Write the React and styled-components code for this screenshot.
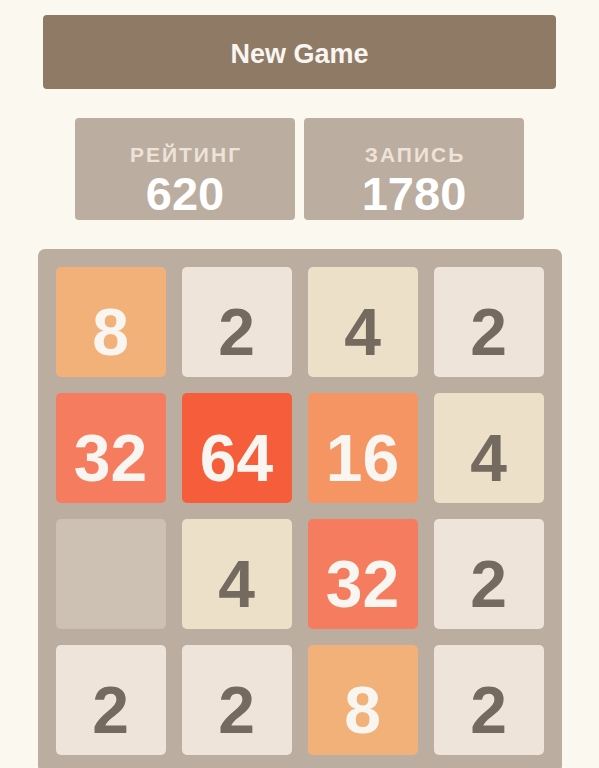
import React from 'react'
import styled, { createGlobalStyle } from 'styled-components'

const GlobalStyle = createGlobalStyle`
    body {
        margin: 0;
        background: #faf8ef;
        font-family: "Liberation Sans", Arial, sans-serif;
    }
`

const Page = styled.div`
    display: flex;
    flex-direction: column;
    align-items: center;
    padding-top: 15px;

    & > * {
        flex-shrink: 0;
    }
`

const NewGame = styled.button`
    width: 513px;
    height: 74px;
    border: none;
    border-radius: 4px;
    background: #8e7a65;
    color: #f9f6f2;
    font-family: inherit;
    font-weight: bold;
    font-size: 27px;
    line-height: 1;
    padding: 4px 0 0;
    cursor: pointer;
`

const Scores = styled.div`
    display: flex;
    gap: 9px;
    margin-top: 29px;
`

const ScoreBox = styled.div`
    width: 220px;
    height: 102px;
    box-sizing: border-box;
    padding-top: 26px;
    border-radius: 4px;
    background: #bbada0;
    display: flex;
    flex-direction: column;
    align-items: center;
    font-weight: bold;
`

const ScoreLabel = styled.div`
    font-size: 21px;
    line-height: 1;
    letter-spacing: 2px;
    margin-right: -2px;
    color: #ede3d8;
`

const ScoreValue = styled.div`
    font-size: 47px;
    line-height: 1;
    margin-top: 5px;
    color: #ffffff;
`

const Board = styled.div`
    margin-top: 29px;
    width: 524px;
    box-sizing: border-box;
    padding: 18px;
    border-radius: 7px;
    background: #bbada0;
    display: grid;
    grid-template-columns: repeat(4, 110px);
    grid-auto-rows: 110px;
    gap: 16px;
`

const tileColors = {
    0: ['#cdc1b4', 'transparent'],
    2: ['#eee4da', '#746a60'],
    4: ['#ede0c8', '#746a60'],
    8: ['#f2b179', '#f9f6f2'],
    16: ['#f59563', '#f9f6f2'],
    32: ['#f67c5f', '#f9f6f2'],
    64: ['#f65e3b', '#f9f6f2'],
}

const Tile = styled.div`
    border-radius: 5px;
    background: ${props => tileColors[props.value][0]};
    color: ${props => tileColors[props.value][1]};
    display: flex;
    align-items: center;
    justify-content: center;
    box-sizing: border-box;
    padding-top: 20px;
    font-weight: bold;
    font-size: 66px;
    line-height: 1;
`

const grid = [
    [8, 2, 4, 2],
    [32, 64, 16, 4],
    [0, 4, 32, 2],
    [2, 2, 8, 2],
]

const App = () => {
    return (
        <Page>
            <GlobalStyle />
            <NewGame>New Game</NewGame>
            <Scores>
                <ScoreBox>
                    <ScoreLabel>РЕЙТИНГ</ScoreLabel>
                    <ScoreValue>620</ScoreValue>
                </ScoreBox>
                <ScoreBox>
                    <ScoreLabel>ЗАПИСЬ</ScoreLabel>
                    <ScoreValue>1780</ScoreValue>
                </ScoreBox>
            </Scores>
            <Board>
                {grid.flat().map((value, i) => (
                    <Tile key={i} value={value}>{value || ''}</Tile>
                ))}
            </Board>
        </Page>
    )
}

export default App
